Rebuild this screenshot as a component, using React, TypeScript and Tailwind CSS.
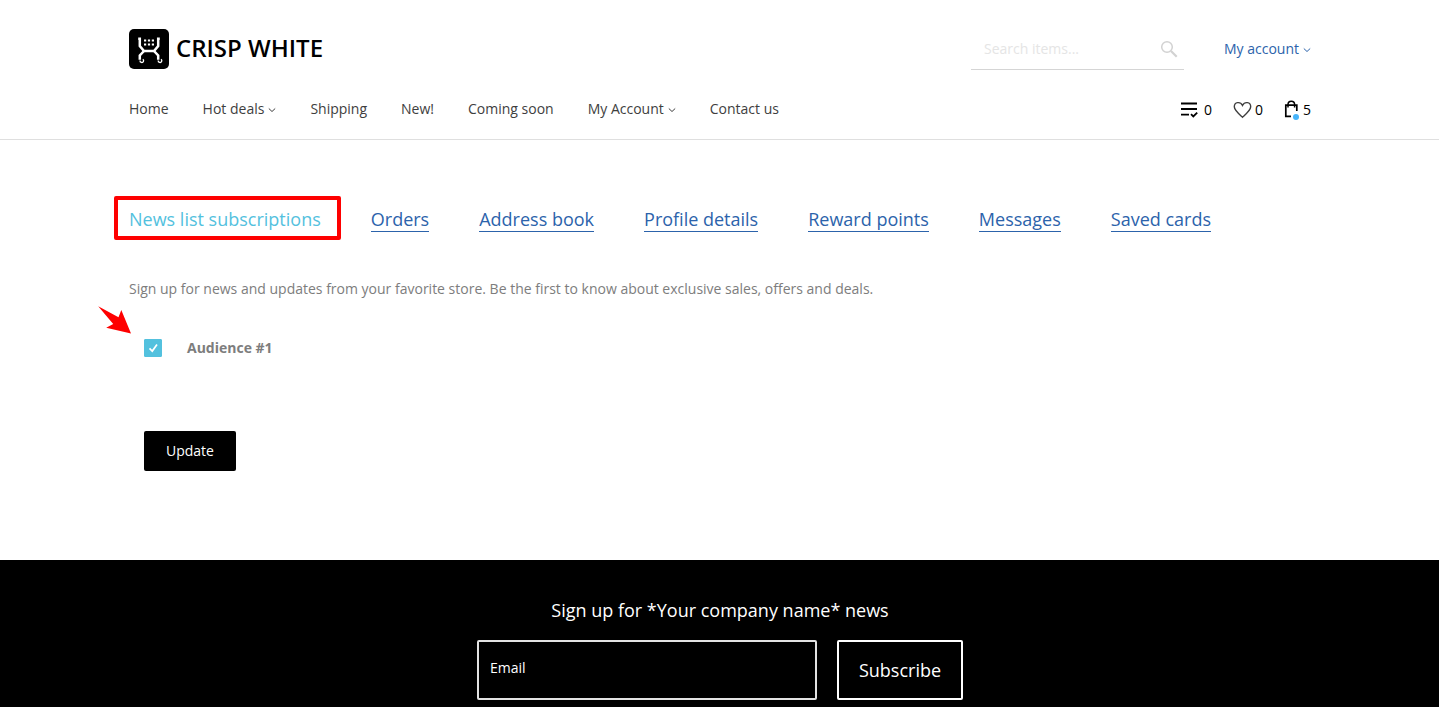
import React from "react";

const navItems = [
  { label: "Home" },
  { label: "Hot deals", menu: true },
  { label: "Shipping" },
  { label: "New!" },
  { label: "Coming soon" },
  { label: "My Account", menu: true },
  { label: "Contact us" },
];

const tabs = ["Orders", "Address book", "Profile details", "Reward points", "Messages", "Saved cards"];

function Caret() {
  return (
    <svg className="mt-0.5 h-2 w-2" viewBox="0 0 8 8" fill="none" stroke="currentColor" strokeWidth="1" aria-hidden="true">
      <path d="M0.8 2.5 4 5.5 7.2 2.5" />
    </svg>
  );
}

function LogoMark() {
  return (
    <svg className="size-10" viewBox="0 0 40 40" aria-hidden="true">
      <rect width="40" height="40" rx="5" fill="#000" />
      <g fill="none" stroke="#fff" strokeWidth="2.5">
        <path d="M9.2 9.8H10.8V17L15 22H25L29.2 17V9.800H30.800" />
        <path d="M15 22 10.800 26.500V30.800M25 22 29.200 26.500V30.800" />
      </g>
      <path d="M15 10.400h2.200v2h-2.200zM18.900 10.400h2.200v2h-2.200zM22.800 10.400h2.200v2h-2.200zM15 14.400h2.200v2h-2.200zM18.900 14.400h2.200v2h-2.200zM22.800 14.400h2.200v2h-2.200z" fill="#fff" />
      <g fill="none" stroke="#fff" strokeWidth="1.300">
        <path d="M13.800 30.200A1.800 1.800 0 1 1 11 31.500M32 30.200A1.800 1.800 0 1 1 29.200 31.500" />
      </g>
    </svg>
  );
}

export default function App() {
  return (
    <div className="flex min-h-screen flex-col bg-white font-['Open_Sans',sans-serif] text-sm text-[#7d7d7d]">
      <header className="border-b border-[#dfdfdf] pt-[29px]">
        <div className="mx-auto max-w-[1183px] pl-px">
          <div className="flex items-start justify-between">
            <a href="#" className="flex items-center gap-[7px] text-2xl leading-10 font-semibold text-black">
              <LogoMark />
              <span className="h-10 leading-[38px]">CRISP WHITE</span>
            </a>
            <div className="flex items-start gap-10">
              <form className="flex h-[41px] w-[213px] items-center border-b border-[#d5d5d5] pr-1.5 pl-[13px]">
                <input
                  type="search"
                  aria-label="Search items"
                  placeholder="Search items..."
                  className="min-w-0 flex-1 bg-transparent text-[#3e3e3e] outline-none placeholder:text-[#e5e5e5]"
                />
                <button type="button" aria-label="Search" className="text-[#d2d2d2]">
                  <svg className="size-[18px]" viewBox="0 0 18 18" fill="none" stroke="currentColor">
                    <circle cx="7" cy="7" r="5.3" strokeWidth="1.5" />
                    <path d="m11 11 5.7 5.7" strokeWidth="2.2" />
                  </svg>
                </button>
              </form>
              <button type="button" className="flex h-10 items-center gap-1 text-[#2c63ab]">
                My account
                <Caret />
              </button>
            </div>
          </div>
          <div className="flex h-[69px] items-center justify-between pt-2">
            <nav className="flex items-center gap-[34px] text-[#3e3e3e]">
              {navItems.map((item) => (
                <a key={item.label} href="#" className="flex items-center gap-1">
                  {item.label}
                  {item.menu && <Caret />}
                </a>
              ))}
            </nav>
            <div className="flex items-center gap-[21px] pt-0.5 text-black">
              <a href="#" aria-label="Compare" className="flex items-center gap-[5px]">
                <svg className="size-[18px]" viewBox="0 0 18 18" fill="none" stroke="currentColor" strokeWidth="1.8">
                  <path d="M0 2.5h16M0 8h16M0 13.7h8M10 13.2l2.3 2.3 3.9-3.9" />
                </svg>
                0
              </a>
              <a href="#" aria-label="Wish list" className="flex items-center gap-[3px]">
                <svg className="size-[19px]" viewBox="0 0 19 19" fill="none" stroke="#3e3e3e" strokeWidth="1.4">
                  <path d="M9.5 17.200C7 14.900 1.300 10.400 1.300 6.800c0-5 6-5.600 8.200-1.400 2.200-4.200 8.200-3.600 8.200 1.400 0 3.600-5.700 8.100-8.200 10.400Z" />
                </svg>
                0
              </a>
              <a href="#" aria-label="Cart" className="flex items-center gap-[3px]">
                <svg className="h-[20px] w-4" viewBox="0 0 16 20" fill="none" stroke="currentColor">
                  <path d="M7 16.300H1.800V5.200H12.800V11" strokeWidth="1.700" />
                  <path d="M4 7.500V4.500C4 0 10.600 0 10.600 4.500V7.500" strokeWidth="1.500" />
                  <circle cx="12" cy="17" r="3" fill="#46b4fa" stroke="none" />
                </svg>
                5
              </a>
            </div>
          </div>
        </div>
      </header>

      <main className="mx-auto w-full max-w-[1183px] pt-[67px] pb-[89px] pl-px">
        <nav className="flex flex-wrap items-start gap-x-[50px] text-lg leading-6 text-[#2c63ab]">
          <a href="#" aria-current="page" className="relative text-[#53c1de]">
            News list subscriptions
            <span className="pointer-events-none absolute -top-[11px] -left-[15px] h-11 w-[227px] rounded-xs border-4 border-[#fe0000]" />
          </a>
          {tabs.map((tab) => (
            <a key={tab} href="#" className="border-b border-current">
              {tab}
            </a>
          ))}
        </nav>
        <p className="mt-[45px] leading-6">
          Sign up for news and updates from your favorite store. Be the first to know about exclusive sales, offers and deals.
        </p>
        <form className="pl-[15px]">
          <div className="relative mt-[35px] flex items-center gap-[25px]">
            <svg
              className="pointer-events-none absolute -top-[30px] -left-[46px] h-7 w-[34px]"
              viewBox="0 0 34 28"
              aria-hidden="true"
            >
              <path d="M.2.300 20.500 11.200 23.300 4 33 27.500 8.200 21.700 15.200 18Z" fill="#fe0000" />
            </svg>
            <span className="grid size-[18px] place-items-center">
              <input
                id="audience"
                type="checkbox"
                defaultChecked
                className="peer col-start-1 row-start-1 size-[18px] appearance-none rounded-[1px] border border-[#53c1de] checked:bg-[#53c1de]"
              />
              <svg
                className="pointer-events-none col-start-1 row-start-1 hidden size-[18px] peer-checked:block"
                viewBox="0 0 18 18"
                fill="none"
                stroke="#fff"
                strokeWidth="1.700"
              >
                <path d="m5.500 9.300 2.800 2.800 4.700-6.500" />
              </svg>
            </span>
            <label htmlFor="audience" className="leading-6 font-bold">
              Audience #1
            </label>
          </div>
          <button type="button" className="mt-[71px] h-10 rounded-xs bg-black px-[22px] font-medium text-white">
            Update
          </button>
        </form>
      </main>

      <footer className="flex-1 bg-black pt-[38px] pr-4 pl-[17px] text-white">
        <h2 className="text-center text-lg leading-6 font-medium">Sign up for *Your company name* news</h2>
        <form className="mt-[18px] flex justify-center gap-5">
          <input
            type="email"
            aria-label="Email"
            placeholder="Email"
            className="h-[60px] w-[340px] rounded-xs border-2 border-[#e3e3e3] bg-transparent px-[11px] pb-1.5 text-sm font-medium outline-none placeholder:text-white"
          />
          <button type="button" className="h-[60px] rounded-xs border-2 border-white px-5 text-lg font-medium">
            Subscribe
          </button>
        </form>
      </footer>
    </div>
  );
}
